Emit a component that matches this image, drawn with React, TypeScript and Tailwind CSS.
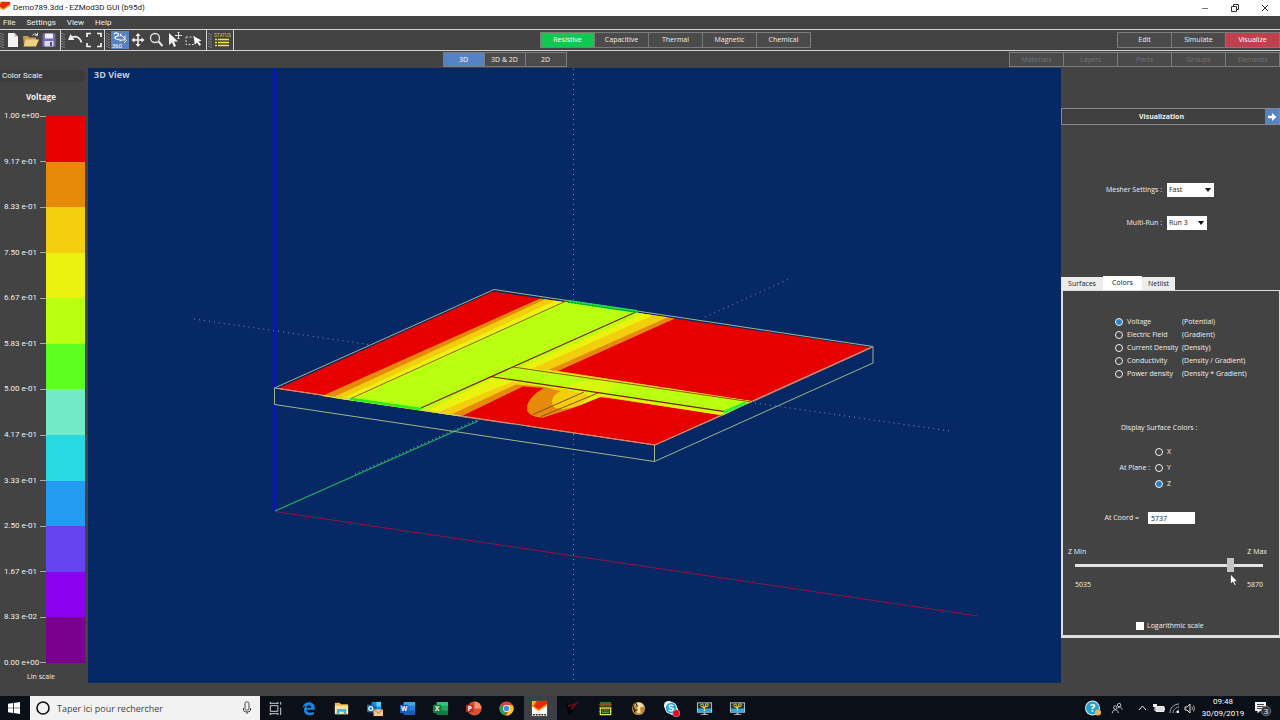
import React, { useState } from "react";

type Kids = { children: React.ReactNode };

function Icon({ children, w = 18, h = 18, box, label }: Kids & { w?: number; h?: number; box?: string; label?: string }) {
  return (
    <svg width={w} height={h} viewBox={box ?? `0 0 ${w} ${h}`} fill="none" role={label ? "img" : undefined} aria-label={label} aria-hidden={label ? undefined : true} className="shrink-0">
      {children}
    </svg>
  );
}

function AppIcon({ children }: Kids) {
  return <Icon w={17} h={17} box="0 0 18 18">{children}</Icon>;
}

function Grip() {
  return (
    <Icon w={4} h={18}>
      <path d="M1 2v15M3 3v14" stroke="#b9b9b9" strokeDasharray="1 1.6" />
    </Icon>
  );
}

function Tool({ label, active, children, wide }: Kids & { label: string; active?: boolean; wide?: boolean }) {
  return (
    <button aria-label={label} className={`flex h-[18px] items-center justify-center ${wide ? "w-[20px]" : "w-[18px]"} ${active ? "bg-[#5583c4]" : ""}`}>
      {children}
    </button>
  );
}

function Toolbar() {
  return (
    <div className="flex h-full items-center">
      <div className="flex h-full w-[61px] items-center border-r border-[#d4d4d4]">
        <Grip />
        <Tool label="New">
          <Icon>
            <path d="M4 2h6.500l3.500 3.500V16H4z" fill="#f3f3f3" />
            <path d="M10.500 2v3.500H14z" fill="#bdbdbd" />
          </Icon>
        </Tool>
        <Tool label="Open">
          <Icon>
            <path d="M1 5h5l1.500 1.500H14V15H2z" fill="#c99a4e" />
            <path d="M4 8.500h13L14 15.500H1.500z" fill="#f3cf85" />
            <path d="M10.500 4.500c1-2 3-2 4.500-.5M15.500 1.800v2.500h-2.500" stroke="#e8e8e8" />
          </Icon>
        </Tool>
        <Tool label="Save">
          <Icon>
            <path d="M2.500 2.500h13v13h-13z" fill="#7a68b4" />
            <path d="M5 2.500h8v5H5z" fill="#f0f0f5" />
            <path d="M4.500 10h9v5.500h-9z" fill="#d9d6ea" />
            <path d="M10 11h2v4h-2z" fill="#55487e" />
          </Icon>
        </Tool>
      </div>
      <div className="flex h-full w-[44px] items-center border-r border-[#d4d4d4]">
        <Grip />
        <Tool label="Undo" wide>
          <Icon>
            <path d="M5 6.500c5-2 9-.5 10.500 5" stroke="#efefef" strokeWidth="1.700" />
            <path d="M2 9 4.500 3l4 6z" fill="#efefef" />
          </Icon>
        </Tool>
        <Tool label="Fit view">
          <Icon>
            <path d="M2 6V2.500h4M12 2.500h4V6M16 12v3.500h-4M6 15.500H2V12" stroke="#f4f4f4" strokeWidth="1.700" />
          </Icon>
        </Tool>
      </div>
      <div className="flex h-full w-[102px] items-center border-r border-[#d4d4d4] pl-px">
        <Grip />
        <div className="flex items-center pl-px">
          <Tool label="Rotate" active>
            <Icon>
              <path d="M3 3c2-2 5-1 4.500 1S3 5 4 7s5 1 6 3" stroke="#fff" strokeWidth="1.200" />
              <path d="m9 3 5 5M14 4.500V9h-4.500M10 2.500l-1 3M16 9l-3 3" stroke="#fff" />
              <text x="1" y="16.500" fill="#fff" fontSize="6" fontFamily="Roboto, sans-serif">360</text>
            </Icon>
          </Tool>
          <Tool label="Pan">
            <Icon>
              <path d="M9 4v10M4 9h10" stroke="#f2f2f2" strokeWidth="1.500" />
              <path d="m9 2 2.500 3h-5zM9 16l2.500-3h-5zM2.500 9l3-2.500v5zM15.500 9l-3-2.500v5z" fill="#f2f2f2" />
            </Icon>
          </Tool>
          <Tool label="Zoom">
            <Icon>
              <circle cx="8" cy="7" r="4.500" stroke="#e6e6e6" strokeWidth="1.300" />
              <path d="m11.500 10.500 4 4.500" stroke="#e6e6e6" strokeWidth="2" />
            </Icon>
          </Tool>
          <Tool label="Select and move" wide>
            <Icon>
              <path d="M3 2v12l3-2.500 2 4.500 2-1-2-4.500h4z" fill="#f4f4f4" />
              <path d="M12.500 1v7M9 4.500h7M11.500 2l1-1 1 1M11.500 7l1 1 1-1" stroke="#e0e0e0" />
            </Icon>
          </Tool>
          <Tool label="Box select">
            <Icon>
              <path d="M1 6h9v7.500H1z" stroke="#d8d8d8" strokeDasharray="2 1.500" />
              <path d="m8.500 5 8 4.500-3 1 2.500 3-1.500 1.500-2.500-3.500-2 2z" fill="#fff" />
            </Icon>
          </Tool>
        </div>
      </div>
      <div className="flex h-full w-[27px] items-center border-r border-[#d4d4d4] pl-px">
        <Grip />
        <Tool label="Status" wide>
          <Icon>
            <text x="1" y="6" fill="#d0c850" fontSize="4.800" fontFamily="Roboto, sans-serif">STATUS</text>
            <path d="M2 8.500h2M2 11.500h2M2 14.500h2M5 8.500h11M5 11.500h11M5 14.500h11" stroke="#f0e63c" strokeWidth="1.400" />
          </Icon>
        </Tool>
      </div>
    </div>
  );
}

function Segments({ items, active, tone, cell, dim }: { items: string[]; active?: string; tone?: string; cell: string; dim?: boolean }) {
  return (
    <div className="flex border-l border-[#7c7c7c]">
      {items.map((t) => (
        <button
          key={t}
          disabled={dim}
          className={`flex items-center justify-center border-y border-r border-[#7c7c7c] text-[7px] leading-[10px] ${cell} ${t === active ? tone : dim ? "bg-[#4a4a4a] text-[#757575]" : "bg-[#4b4b4b] text-[#f0f0f0]"}`}
        >
          {t}
        </button>
      ))}
    </div>
  );
}

const scale = [
  "bg-[#e60000]", "bg-[#e78a0a]", "bg-[#f2ce0c]", "bg-[#ebf210]", "bg-[#b9ff10]", "bg-[#5dff20]",
  "bg-[#72eac8]", "bg-[#28d9e2]", "bg-[#249af2]", "bg-[#6644f0]", "bg-[#8c00f0]", "bg-[#7a0090]",
];
const ticks = ["1.00 e+00", "9.17 e-01", "8.33 e-01", "7.50 e-01", "6.67 e-01", "5.83 e-01", "5.00 e-01", "4.17 e-01", "3.33 e-01", "2.50 e-01", "1.67 e-01", "8.33 e-02", "0.00 e+00"];

function ColorScale() {
  return (
    <aside className="mb-[13px] flex w-[88px] shrink-0 flex-col text-[#f0f0f0]">
      <h2 className="mt-[2px] mr-[3px] h-3 bg-[#3c3c3c] pl-[2px] font-['Roboto',sans-serif] text-[8px] leading-3">Color Scale</h2>
      <div className="mt-[9px] h-3 pr-[6px] text-center text-[8px] leading-3 font-bold">Voltage</div>
      <div className="mt-[7px] flex flex-1 pr-[3px]">
        <ul className="flex w-[46px] flex-col justify-between">
          {ticks.map((t) => (
            <li key={t} className="flex h-3 items-center justify-between pl-1 font-['Roboto',sans-serif] text-[8px] leading-3 whitespace-nowrap">
              {t}
              <span className="h-px w-[6px] shrink-0 bg-[#a8a8a8]" />
            </li>
          ))}
        </ul>
        <div className="my-[6px] flex flex-1 flex-col">
          {scale.map((c) => (
            <div key={c} className={`flex-1 ${c}`} />
          ))}
        </div>
      </div>
      <div className="h-[14px] pt-px pr-[6px] text-center text-[7px] leading-[14px]">Lin scale</div>
    </aside>
  );
}

function Board() {
  return (
    <svg viewBox="88 68 973 615" preserveAspectRatio="xMidYMid meet" className="block h-full w-full" role="img" aria-label="Board potential map" fill="none">
      <g stroke="#7f90b8" strokeDasharray="1 4">
        <path d="M573.500 69V300M573.500 434V683" />
        <path d="M194 319 372 345M705 317 789 279M755 403 950 431" />
      </g>
      <path d="M274.500 68V511" stroke="#0a0ae8" />
      <path d="M275 511.500 978 616" stroke="#961040" />
      <path d="M275 511 478 421" stroke="#1fae62" strokeWidth="1.200" />
      <path d="M355 474 478 419.500" stroke="#7adba0" strokeDasharray="1 3" />
      {/* conductor surface, hottest level first */}
      <path d="M277 389 493 291.500 871 347.500 655 445z" fill="#e60000" />
      <path d="M322 396 540 298.500 675 318.500 558 371 752 401.500 722 415 612 398.500 600 397.500 570 409 543 417.500C533 417 526 413 527 408 528 400 535 394 544 388L523 386.500 461 416.500z" fill="#e78a0a" />
      <path d="M332 397.800 545 299.300 668 317.200 549 369.800 752 401 723 415.500 600 396.500 575 407 541 413.500 556 409C550 405 550 398 558 391L545 387 516 384.500 450 415z" fill="#f2ce0c" />
      <path d="M543 388.500C533 394 527 402 527 408 527 414 535 418 543 417.500L564 409C552 409 550 405 552 401 553 396 556 393 561 391z" fill="#e78a0a" />
      <path d="M341 399 555 300.800 653 315.300 533 368.300 752 401.200 723 415.200 602 396 578 406 592 396 565 389 512 382 437 412.500z" fill="#ebf210" />
      <path d="M351 400 565 301.500 637 312.300 642 313.700 520 367.500 752 402 724 413.500 600 394.500 493 378.500 426 410.500z" fill="#b9ff10" />
      <path d="M600 380 617 383 606 394 592 392 560 387 578 382z" fill="#e6f410" opacity=".7" />
      <g stroke="#7c3c00">
        <path d="M351 398.500 565 301.500" strokeWidth=".8" />
        <path d="M421 408 637 311.500M490 376.500 725 411.700" stroke="#802000" strokeWidth="1.200" />
        <path d="M513 367 752 402" stroke="#a05000" />
        <path d="M533 414.500 584 392M541 416.500 598 393" stroke="#8a5000" />
      </g>
      <g stroke="#9fb68e">
        <path d="M274.500 388 494 289.500 873 346.500 655 445z" />
        <path d="M274.500 388V404.500L654.500 461.500 873 363V346.500M654.500 445V461.500" />
      </g>
      <path d="M279 388.500 322 395M461 416.500 513 424M527 426 655 445 723 415M753 401.500 871 348" stroke="#f07a60" />
      <path d="M322 395.500 350 399.500M421 410 460 416" stroke="#e8e030" />
      <path d="M350 398.800 421 409" stroke="#22f020" strokeWidth="2.400" />
      <path d="M568 301.300 637 311.500" stroke="#18e048" strokeWidth="2.800" />
      <path d="M568 302 637 312.200" stroke="#075f38" strokeDasharray="2 1" strokeWidth=".8" />
      <path d="M724 412 746 402.500" stroke="#2cf030" strokeWidth="2.800" />
    </svg>
  );
}

const quantities = [
  ["Voltage", "(Potential)"],
  ["Electric Field", "(Gradient)"],
  ["Current Density", "(Density)"],
  ["Conductivity", "(Density / Gradient)"],
  ["Power density", "(Density * Gradient)"],
];

const radio = "size-[8px] shrink-0 appearance-none rounded-full border border-[#f0f0f0] checked:bg-[#2a80c0]";

function Choice({ id, label, options, width }: { id: string; label: string; options: string[]; width: string }) {
  return (
    <div className="flex h-[14px] items-center gap-[5px]">
      <label htmlFor={id} className="w-[101px] text-right">{label}</label>
      <div className={`grid h-full items-center ${width}`}>
        <select id={id} className="col-start-1 row-start-1 h-full w-full appearance-none bg-white pl-[2px] text-[7px] leading-[14px] text-[#222]">
          {options.map((o) => <option key={o}>{o}</option>)}
        </select>
        <span className="pointer-events-none col-start-1 row-start-1 justify-self-end pr-[3px]">
          <Icon w={6} h={4}><path d="M0 0h6L3 4z" fill="#111" /></Icon>
        </span>
      </div>
    </div>
  );
}

function SidePanel() {
  const [quantity, setQuantity] = useState("Voltage");
  const [plane, setPlane] = useState("Z");
  const [coord, setCoord] = useState(5737);
  const [log, setLog] = useState(false);
  return (
    <aside className="flex w-[219px] shrink-0 flex-col pt-10 text-[7px] leading-3 text-[#f0f0f0]">
      <div className="flex h-[17px] border border-[#858a90]">
        <h2 className="flex flex-1 items-center justify-center bg-[#404040] pr-1 font-bold">Visualization</h2>
        <button aria-label="Collapse panel" className="flex w-[14px] items-center justify-center bg-[#5583c4]">
          <Icon w={10} h={10}><path d="M1 3.800h4V1l4.500 4L5 9V6.200H1z" fill="#fff" /></Icon>
        </button>
      </div>
      <div className="mt-[58px] flex flex-col gap-[19px]">
        <Choice id="mesher" label="Mesher Settings :" options={["Fast", "Fine"]} width="w-[47px]" />
        <Choice id="run" label="Multi-Run :" options={["Run 3", "Run 2", "Run 1"]} width="w-[40px]" />
      </div>
      <div role="tablist" className="mt-[46px] flex h-[14px] items-end text-[#222]">
        <button role="tab" className="h-[13px] w-[42px] bg-[#ececec]">Surfaces</button>
        <button role="tab" aria-selected="true" className="h-[14px] w-[39px] bg-white">Colors</button>
        <button role="tab" className="h-[13px] w-[33px] bg-[#ececec]">Netlist</button>
      </div>
      <div className="flex flex-col border-t border-r border-b-3 border-l-2 border-[#dedede] pt-6 pb-[3px]">
        <div className="flex flex-col pl-[52px]">
          {quantities.map(([name, kind]) => (
            <label key={name} className="flex h-[13px] items-center">
              <input type="radio" name="quantity" className={radio} checked={quantity === name} onChange={() => setQuantity(name)} />
              <span className="w-[59px] pl-1 whitespace-nowrap">{name}</span>
              <span>{kind}</span>
            </label>
          ))}
        </div>
        <div className="mt-[42px] h-[13px] pl-[58px]">Display Surface Colors :</div>
        <div className="mt-[9px] flex items-center gap-[5px]">
          <span className="w-[87px] text-right">At Plane :</span>
          <div className="flex flex-col">
            {["X", "Y", "Z"].map((p) => (
              <label key={p} className="flex h-4 items-center gap-1">
                <input type="radio" name="plane" className={radio} checked={plane === p} onChange={() => setPlane(p)} />
                {p}
              </label>
            ))}
          </div>
        </div>
        <div className="mt-[20px] flex h-3 items-center gap-[9px]">
          <label htmlFor="coord" className="w-[76px] text-right">At Coord =</label>
          <input id="coord" className="h-full w-[47px] bg-white pl-[3px] text-[#222]" value={coord} onChange={(e) => setCoord(Number(e.target.value) || 0)} />
        </div>
        <div className="mt-[22px] flex h-3 justify-between pr-3 pl-[5px]">
          <span>Z Min</span>
          <span>Z Max</span>
        </div>
        <input
          type="range"
          aria-label="Z coordinate"
          min={5035}
          max={5870}
          value={coord}
          onChange={(e) => setCoord(Number(e.target.value))}
          className="mr-4 ml-3 h-[15px] appearance-none bg-transparent [&::-webkit-slider-runnable-track]:h-[3px] [&::-webkit-slider-runnable-track]:bg-[#e4e4e4] [&::-webkit-slider-thumb]:-mt-[6px] [&::-webkit-slider-thumb]:h-[14px] [&::-webkit-slider-thumb]:w-[7px] [&::-webkit-slider-thumb]:appearance-none [&::-webkit-slider-thumb]:bg-[#c4c4c4]"
        />
        <div className="relative mt-[6px] flex h-3 justify-between pr-4 pl-3">
          <span>5035</span>
          <span>5870</span>
          <span className="pointer-events-none absolute -top-[6px] right-[41px]">
            <Icon w={9} h={13}><path d="M1.500 1v10l2.300-2 1.700 3.500 1.600-.8-1.600-3.300H8.500z" fill="#fff" stroke="#222" strokeWidth=".6" /></Icon>
          </span>
        </div>
        <label className="mt-[29px] flex h-3 items-center gap-[3px] pl-[73px]">
          <input type="checkbox" checked={log} onChange={() => setLog(!log)} className="size-[8px] appearance-none bg-white checked:bg-[#2a80c0]" />
          Logarithmic scale
        </label>
      </div>
    </aside>
  );
}

function Office({ letter, dark, light, mid }: { letter: string; dark: string; light: string; mid: string }) {
  return (
    <AppIcon>
      <rect x="5" y="2" width="12" height="14" rx="1" fill={mid} />
      <path d="M5 3a1 1 0 0 1 1-1h10a1 1 0 0 1 1 1v3H5z" fill={light} />
      <path d="M5 11h12v4a1 1 0 0 1-1 1H6a1 1 0 0 1-1-1z" fill={dark} />
      <rect x="1" y="5" width="9" height="9" rx="1" fill={dark} />
      <text x="5.500" y="12" textAnchor="middle" fill="#fff" fontSize="7" fontWeight="700" fontFamily="Open Sans, sans-serif">{letter}</text>
    </AppIcon>
  );
}

function SimIcon() {
  return (
    <AppIcon>
      <rect x="1" y="2.500" width="16" height="11" fill="#b8c4cc" />
      <rect x="2" y="3.500" width="14" height="6" fill="#28323c" />
      <path d="M2 9h14v4H2z" fill="#2ca8e6" />
      <path d="M9 12V7M9 9 7 7M9 8l2-2" stroke="#e8d838" strokeWidth="1.200" />
      <circle cx="6.500" cy="5.800" r="1.500" stroke="#e8d838" />
      <circle cx="11.500" cy="5.500" r="1.500" stroke="#e8d838" />
      <path d="M8 13.500h2V15h3v1H5v-1h3z" fill="#b8c4cc" />
    </AppIcon>
  );
}

const EzMark = () => (
  <>
    <path d="M1 1h16v16H1z" fill="#fafafa" />
    <path d="M1 1h16v4L8 11 1 6z" fill="#e62a10" />
    <path d="M1 1h5L3 6 1 5z" fill="#f6b030" />
    <path d="m1 5 7 5 9-6v2l-9 6-7-5z" fill="#f8a020" />
  </>
);

const apps: [string, React.ReactNode][] = [
  ["Task view", <AppIcon><path d="M3.500 6h8v6h-8zM3 3.500h9M3 14.500h9M3.500 2v2M11.500 2v2M3.500 14v2M11.500 14v2M14.500 2v3M14.500 8v8" stroke="#d8d8d8" /></AppIcon>],
  ["Edge", <Icon w={15} h={15} box="0 0 18 18"><path d="M2 8.500C2.500 4 5.500 1.500 9.500 1.500c4.500 0 7 3 7 7v2H6.500c.3 2.500 2.200 3.500 4.700 3.500 1.600 0 3-.4 4.300-1.200v3c-1.300.8-3 1.200-5 1.200C6.500 17 3.500 14.700 3.500 11c0-2.200 1.100-4 3-5.200C4.500 6.200 3 7 2 8.500zM6.600 8h5.700c0-2-1-3-2.700-3-1.600 0-2.700 1-3 3z" fill="#1687e0" /></Icon>],
  ["Files", <AppIcon><path d="M2 3h5l1.500 1.500H16V15H2z" fill="#e8b94c" /><path d="M2 6h14v9H2z" fill="#fce59a" /><path d="M4 15V9.500h10V15h-2.500v-2.500h-5V15z" fill="#45b4e0" /></AppIcon>],
  ["Outlook", <AppIcon><path d="M6 2h10v11H6z" fill="#1a8ee0" /><path d="M11 2h5v5h-5z" fill="#50d0ff" /><path d="M6 7h5v6H6z" fill="#0c5aa8" /><rect x="1" y="5" width="8" height="8" fill="#0f6cbd" /><circle cx="5" cy="9" r="2" stroke="#fff" strokeWidth="1.300" /><path d="M8 10h10v7H8z" fill="#f3c58c" /><path d="m8 10 5 4 5-4" stroke="#b87a3c" /></AppIcon>],
  ["Word", <Office letter="W" dark="#185abd" mid="#2b7cd3" light="#41a5ee" />],
  ["Excel", <Office letter="X" dark="#107c41" mid="#21a366" light="#33c481" />],
  ["PowerPoint", <AppIcon><circle cx="10" cy="9" r="7.500" fill="#d35230" /><path d="M10 1.500A7.500 7.500 0 0 1 17.500 9H10z" fill="#ff8f6b" /><rect x="1" y="5" width="8" height="8" rx="1" fill="#b7321a" /><text x="5" y="11.500" textAnchor="middle" fill="#fff" fontSize="7" fontWeight="700" fontFamily="Open Sans, sans-serif">P</text></AppIcon>],
  ["Chrome", <AppIcon><circle cx="9" cy="9" r="7.500" fill="#e04434" /><path d="M2.500 5.300 9 9l-1 7.400A7.500 7.500 0 0 1 2.500 5.300z" fill="#2ca04c" /><path d="M9 5.500h6.600A7.500 7.500 0 0 1 8.500 16.500L12 10z" fill="#fbc91c" /><circle cx="9" cy="9" r="3.700" fill="#fff" /><circle cx="9" cy="9" r="2.800" fill="#4285f4" /></AppIcon>],
  ["EZMod3D", <AppIcon><EzMark /><path d="M2 15.500h2M5 15.500h2M8 15.500h2M11 15.500h2M14 15.500h2" stroke="#222" strokeWidth="1.600" /></AppIcon>],
  ["Viewer", <AppIcon><path d="M2 3 14 8 5 16z" fill="#020202" /><path d="m4 7 2-2 2 1M9 6c2-3 4-1 2 1S8 8 9 6zM11 5l4-3M7 9l3 1" stroke="#7c1020" strokeWidth="1.200" /></AppIcon>],
  ["Layout", <AppIcon><path d="M3 2h12v5H3z" fill="#267a28" /><path d="M2 5h14M2 8h14M2 12h14" stroke="#d03018" /><path d="M3.500 8.500h11v7h-11z" stroke="#e8ec50" strokeWidth="1.300" /><path d="M5 10h8v1H5zM5 13h8v1H5z" fill="#68c838" /></AppIcon>],
  ["Gold", <AppIcon><circle cx="9" cy="9" r="7" fill="#b98a3c" /><path d="M5 4c4-3 9-1 10 4-3-2-5 0-4 3s-1 4-4 2c3-3 0-5-2-9z" fill="#f5dca0" /><path d="M3 5c0 4 1 6 4 6M6 3l2 4M4 8l1 5" stroke="#362408" strokeWidth="1.300" /></AppIcon>],
  ["Skype", <AppIcon><circle cx="6" cy="6" r="5" fill="#e8f7ff" /><circle cx="11" cy="11" r="5" fill="#e8f7ff" /><circle cx="8.500" cy="8.500" r="6.500" fill="#e8f7ff" /><circle cx="8.500" cy="8.500" r="5.500" fill="#1ca8e8" /><path d="M11 6.500C10 5 6.500 5 6.500 7s4.500 1 4.500 3-4 2-5 .3" stroke="#fff" strokeWidth="1.500" /><circle cx="14" cy="14" r="3.800" fill="#d80c28" stroke="#f3b4bc" strokeWidth=".6" /></AppIcon>],
  ["Simulator", <SimIcon />],
  ["Simulator 2", <SimIcon />],
];

function Taskbar() {
  return (
    <footer className="flex h-6 shrink-0 items-center bg-[#0a0f18] font-['Open_Sans',sans-serif]">
      <button aria-label="Start" className="flex w-[30px] justify-center pr-[2px]">
        <Icon w={12} h={12}><path d="M0 1.700 5.200 1v4.700H0zM6 .9 12 0v5.700H6zM0 6.300h5.200V11L0 10.300zM6 6.300h6V12l-6-.9z" fill="#fff" /></Icon>
      </button>
      <div className="flex h-full w-[230px] items-center gap-[7px] bg-[#f2f2f2] pr-2 pl-[6px]">
        <Icon w={14} h={14}><circle cx="7" cy="7" r="6" stroke="#111" strokeWidth="1.600" /></Icon>
        <input aria-label="Taper ici pour rechercher" placeholder="Taper ici pour rechercher" className="h-full min-w-0 flex-1 bg-transparent pt-px text-[9px] placeholder:text-[#444]" />
        <Icon w={10} h={14}><rect x="3" y="1" width="4" height="8" rx="1.500" stroke="#444" /><path d="M1.500 7v2q0 2 3.500 2t3.500-2V7M5 11v2" stroke="#444" /></Icon>
      </div>
      <nav className="flex h-full flex-1">
        {apps.map(([name, icon]) => (
          <button key={name} aria-label={name} className={`flex w-[33px] items-center justify-center pt-px pr-[2px] ${name === "EZMod3D" ? "bg-[#3d3f45]" : ""}`}>
            {icon}
          </button>
        ))}
      </nav>
      <div className="flex h-full items-center text-white">
        <Icon w={18} h={18} label="Help"><circle cx="8.500" cy="9" r="7.500" fill="#d9f2fa" /><circle cx="8.500" cy="9" r="6.500" fill="#28a0cc" /><text x="8.500" y="13" fill="#fff" textAnchor="middle" fontSize="11" fontWeight="700" fontFamily="Open Sans, sans-serif">?</text><circle cx="14" cy="13.500" r="3" fill="#f0b840" /></Icon>
        <span className="pl-[9px]"><Icon w={12} h={12} box="0 0 14 14" label="People"><circle cx="5" cy="6.500" r="2" stroke="#ddd" /><path d="M1.500 13c0-5 7-5 7 0" stroke="#ddd" /><circle cx="9.500" cy="3.500" r="2" stroke="#ddd" /><path d="M8 7c3-2 5 0 5 2" stroke="#ddd" /></Icon></span>
        <span className="pl-[15px]"><Icon w={9} h={8} label="Show hidden icons"><path d="m1 6 3.500-4L8 6" stroke="#e6e6e6" /></Icon></span>
        <span className="pl-[6px]"><Icon w={12} h={10} label="Battery"><path d="M3 3.500h8v5H3z" fill="#ddd" stroke="#eee" /><path d="M0 1h4v3H0zM11 5h1v2h-1z" fill="#eee" /><path d="M2 4v4" stroke="#eee" /></Icon></span>
        <span className="pl-[4px]"><Icon w={11} h={11} label="Wireless"><path d="M1 10c0-5 4-9 9-9M4 10c0-3 3-6 6-6M7 10c0-1.500 1.500-3 3-3" stroke="#aaa" /><path d="M8 8h2v2H8z" fill="#eee" /></Icon></span>
        <span className="pl-[4px]"><Icon w={12} h={11} label="Volume"><path d="M1 4h2l3-3v9L3 7H1z" stroke="#e5e5e5" /><path d="M8 4q1 1.500 0 3M9.500 2.500q2 3 0 6" stroke="#aaa" /></Icon></span>
        <div className="flex w-[54px] flex-col items-center font-['Roboto',sans-serif] text-[8px] leading-[12px]">
          <span>09:48</span>
          <span>30/09/2019</span>
        </div>
        <span className="pr-2 pl-1"><Icon w={18} h={18} label="3 notifications"><path d="M1 3h11v9H6l-2.500 2.500V12H1z" fill="#f2f2f2" /><path d="M3 5.500h7M3 7.500h7M3 9.500h5" stroke="#444" /><circle cx="12" cy="12" r="4.800" fill="#333840" stroke="#888" strokeWidth=".7" /><text x="12" y="15" textAnchor="middle" fill="#fff" fontSize="8" fontFamily="Open Sans, sans-serif">3</text></Icon></span>
      </div>
    </footer>
  );
}

export default function App() {
  return (
    <div className="flex h-screen flex-col overflow-hidden bg-[#434343] font-['Open_Sans',sans-serif]">
      <header className="flex h-4 shrink-0 items-center bg-white text-[#222]">
        <Icon w={11} h={14} box="4 0 14 18"><EzMark /></Icon>
        <h1 className="flex-1 pl-[2px] font-['Roboto',sans-serif] text-[8px] leading-4">Demo789.3dd - EZMod3D GUI (b95d)</h1>
        <div className="flex">
          <button aria-label="Minimize" className="flex w-[30px] justify-center"><Icon w={8} h={8}><path d="M1 4.500h6" stroke="#777" /></Icon></button>
          <button aria-label="Restore" className="flex w-[30px] justify-center"><Icon w={8} h={8}><path d="M.5 2.500h5v5h-5zM2.500 2.500v-2h5v5h-2" stroke="#333" /></Icon></button>
          <button aria-label="Close" className="flex w-[30px] justify-center"><Icon w={8} h={8}><path d="m1 1 6 6M7 1 1 7" stroke="#333" /></Icon></button>
        </div>
      </header>
      <nav className="flex h-[13px] shrink-0 items-center gap-[11px] pl-[3px] font-['Roboto',sans-serif] text-[8px] leading-[13px] text-[#f0f0f0]">
        {["File", "Settings", "View", "Help"].map((m) => <button key={m}>{m}</button>)}
      </nav>
      <div className="flex h-[22px] shrink-0 items-center justify-between border-y border-[#d4d4d4]">
        <Toolbar />
        <Segments items={["Resistive", "Capacitive", "Thermal", "Magnetic", "Chemical"]} active="Resistive" tone="bg-[#12c850] text-white" cell="h-4 w-[54px]" />
        <Segments items={["Edit", "Simulate", "Visualize"]} active="Visualize" tone="bg-[#c0404e] text-white" cell="h-4 w-[54px]" />
      </div>
      <div className="flex h-[17px] shrink-0 items-center">
        <div className="flex flex-1 justify-center">
          <Segments items={["3D", "3D & 2D", "2D"]} active="3D" tone="bg-[#5583c4] text-white" cell="h-[15px] w-[41px]" />
        </div>
        <Segments items={["Materials", "Layers", "Ports", "Groups", "Elements"]} cell="h-[15px] w-[54px]" dim />
      </div>
      <main className="flex min-h-0 flex-1">
        <ColorScale />
        <section className="relative mb-[13px] min-w-0 flex-1 bg-[#062864]">
          <h2 className="absolute top-0 left-[6px] text-[9px] leading-[14px] font-bold text-[#c2cbdc]">3D View</h2>
          <Board />
        </section>
        <SidePanel />
      </main>
      <Taskbar />
    </div>
  );
}
